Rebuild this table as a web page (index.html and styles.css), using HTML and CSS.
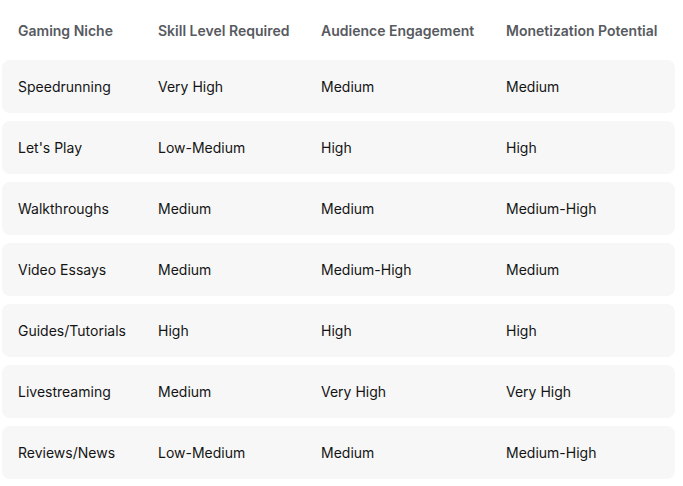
FILE: index.html
```html
<!DOCTYPE html>
<html>
<head>
<meta charset="utf-8">
<link rel="stylesheet" href="styles.css">
</head>
<body>
<table class="niche-table">
  <thead>
    <tr>
      <th class="c1">Gaming Niche</th>
      <th class="c2">Skill Level Required</th>
      <th class="c3">Audience Engagement</th>
      <th class="c4">Monetization Potential</th>
    </tr>
  </thead>
  <tbody>
    <tr><td>Speedrunning</td><td>Very High</td><td>Medium</td><td>Medium</td></tr>
    <tr><td>Let's Play</td><td>Low-Medium</td><td>High</td><td>High</td></tr>
    <tr><td>Walkthroughs</td><td>Medium</td><td>Medium</td><td>Medium-High</td></tr>
    <tr><td>Video Essays</td><td>Medium</td><td>Medium-High</td><td>Medium</td></tr>
    <tr><td>Guides/Tutorials</td><td>High</td><td>High</td><td>High</td></tr>
    <tr><td>Livestreaming</td><td>Medium</td><td>Very High</td><td>Very High</td></tr>
    <tr><td>Reviews/News</td><td>Low-Medium</td><td>Medium</td><td>Medium-High</td></tr>
  </tbody>
</table>
</body>
</html>
```
FILE: styles.css
```css
html, body {
  margin: 0;
  padding: 0;
  background: #ffffff;
}
body {
  font-family: Inter, "Noto Sans", sans-serif;
  font-size: 14px;
  color: #141414;
}
.niche-table {
  margin-left: 2px;
  width: 673px;
  border-collapse: separate;
  border-spacing: 0 8px;
  margin-top: 0;
  table-layout: fixed;
}
.niche-table th,
.niche-table td {
  box-sizing: border-box;
}
.c1 { width: 140px; }
.c2 { width: 163px; }
.c3 { width: 185px; }
.c4 { width: 185px; }
th {
  text-align: left;
  font-weight: 600;
  color: #575a60;
  height: 44px;
  padding: 0 0 0 16px;
  vertical-align: middle;
  white-space: nowrap;
}
td {
  background: #f7f7f7;
  height: 53px;
  padding: 0 0 0 16px;
  vertical-align: middle;
  white-space: nowrap;
}
td:first-child {
  border-radius: 8px 0 0 8px;
}
td:last-child {
  border-radius: 0 8px 8px 0;
}
```
